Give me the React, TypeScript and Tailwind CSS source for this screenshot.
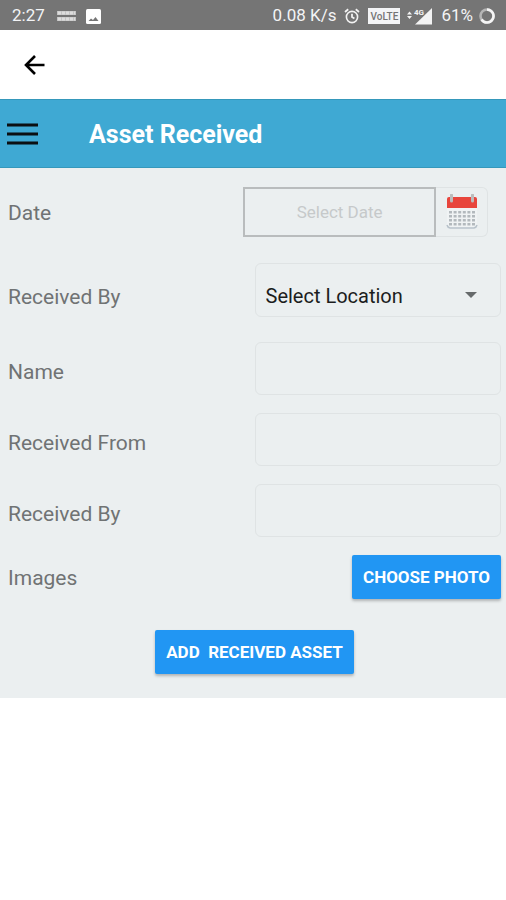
import { useState } from 'react'
import type { ReactNode } from 'react'

const locations = ['Select Location', 'Head Office', 'Warehouse', 'Branch']

function StatusBar() {
  return (
    <div className="flex h-[30px] items-center bg-[#757575] pl-3 pr-[11px] pt-[2px] text-[17px] text-gray-100">
      <span>2:27</span>

      <svg className="ml-3 h-3 w-[19px]" viewBox="0 0 19 12" aria-hidden="true">
        <path d="M0 3h19M0 9h19" stroke="#c4c4c4" strokeWidth="4" />
        <path d="M1 3h17M1 9h17" stroke="#e8e8e8" strokeWidth="3" strokeDasharray="3 1" opacity="0.7" />
      </svg>

      <svg className="ml-[10px] size-[15px]" viewBox="0 0 15 15" aria-hidden="true">
        <rect width="15" height="15" rx="1.5" fill="#fff" />
        <path d="M2.5 12l2.5-2.5 2 1.5 2.5-3 3 4z" fill="#757575" />
      </svg>

      <span className="ml-auto">0.08 K/s</span>

      <svg className="ml-2 size-4" viewBox="0 0 16 16" fill="none" stroke="#f3f3f3" aria-hidden="true">
        <circle cx="8" cy="9" r="5.6" strokeWidth="1.6" />
        <path d="M8 5.8V9l2.4 1.6M1 4l3.2-2.7M15 4l-3.2-2.7" strokeWidth="1.8" />
      </svg>

      <span className="ml-2 flex h-4 w-8 items-center justify-center bg-gray-100 text-[10px] font-medium text-[#757575]">
        VoLTE
      </span>

      <svg className="ml-[7px] h-[17px] w-[25px]" viewBox="0 0 25 17" aria-hidden="true">
        <path d="M2.5 3.5l2.5 3h-5zM2.5 11l2.5-3h-5z" fill="#f3f3f3" />
        <path d="M25 0v16.5H8z" fill="#f3f3f3" />
        <path d="M6 0h11v7L14 9H6z" fill="#757575" />
        <text x="7" y="7" fontSize="8" fontWeight="700" fill="#f3f3f3">4G</text>
      </svg>

      <span className="ml-[9px]">61%</span>

      <svg className="ml-[6px] size-4" viewBox="0 0 16 16" fill="none" strokeWidth="2.6" aria-hidden="true">
        <circle cx="8" cy="8" r="6.5" stroke="#b5b5b5" />
        <path d="M8 1.5A6.5 6.5 0 1 1 2.5 11.5" stroke="#f5f5f5" />
      </svg>
    </div>
  )
}

function CalendarIcon() {
  const dots = [0, 1, 2, 3, 4, 5]
  return (
    <svg className="h-9 w-8" viewBox="0 0 32 36" aria-hidden="true">
      <path d="M1 13h30v19a3 3 0 0 1-3 3H4a3 3 0 0 1-3-3z" fill="#f0f3f4" />
      <path d="M1 31a4 4 0 0 0 3 3h24a4 4 0 0 0 3-3" fill="none" stroke="#b8c2ca" strokeWidth="1.5" />
      <path d="M1 14V5a2 2 0 0 1 2-2h26a2 2 0 0 1 2 2v9z" fill="#e8453c" />
      <path d="M5.5 1v6M26.5 1v6" stroke="#bcbcbc" strokeWidth="3" strokeLinecap="round" />
      {[17, 21, 25, 29].map((y) =>
        dots.map((i) => <rect key={`${i}-${y}`} x={3 + i * 4.6} y={y} width="3" height="2.5" fill="#b3b9bd" />)
      )}
    </svg>
  )
}

type RowProps = {
  id: string
  label: string
  className: string
  labelClass?: string
  children: ReactNode
}

function Row({ id, label, className, labelClass = 'pt-[6px]', children }: RowProps) {
  return (
    <div className={`flex items-center justify-between ${className}`}>
      <label htmlFor={id} className={`text-[21px] leading-6 text-[#707374] ${labelClass}`}>
        {label}
      </label>
      {children}
    </div>
  )
}

const field = 'h-[53px] w-1/2 rounded-md border border-[#dfe3e4] bg-transparent px-3 text-xl text-black outline-none'
const action = 'h-11 rounded-xs bg-[#2196f3] px-[11px] pt-[2px] text-[17px] font-bold text-white whitespace-pre shadow-[0_2px_3px_rgba(0,0,0,0.25)]'

export default function App() {
  const [date, setDate] = useState('')
  const [location, setLocation] = useState(locations[0])
  const [name, setName] = useState('')
  const [from, setFrom] = useState('')
  const [by, setBy] = useState('')

  return (
    <main className="min-h-screen bg-white font-['Roboto',sans-serif]">
      <StatusBar />

      <nav className="flex h-[69px] items-center px-6">
        <button type="button" aria-label="Back">
          <svg className="size-[22px]" viewBox="0 0 22 22" fill="none" stroke="#000" strokeWidth="2.6" aria-hidden="true">
            <path d="M20.5 11H3M11 2l-9 9 9 9" />
          </svg>
        </button>
      </nav>

      <header className="flex h-[69px] items-center border-y border-[#3598bb] bg-[#3fa9d3] pl-[7px]">
        <button type="button" aria-label="Menu">
          <svg className="h-6 w-[31px]" viewBox="0 0 31 24" stroke="#0b0f11" strokeWidth="3" aria-hidden="true">
            <path d="M0 3h31M0 12h31M0 21h31" />
          </svg>
        </button>
        <h1 className="ml-[51px] pt-[2px] text-[25px] font-bold text-white">Asset Received</h1>
      </header>

      <form className="bg-[#ebeff0] pb-6 pl-2 pr-[5px] pt-[19px]" onSubmit={(e) => e.preventDefault()}>
        <Row id="date" label="Date" className="pr-[13px]" labelClass="pt-[2px]">
          <div className="flex h-[50px] w-[51%]">
            <input
              id="date"
              type="text"
              placeholder="Select Date"
              value={date}
              onChange={(e) => setDate(e.target.value)}
              className="min-w-0 flex-1 border-2 border-[#b9bcbd] bg-transparent pt-[2px] text-center text-[17px] outline-none placeholder:text-[#c6c9ca]"
            />
            <button
              type="button"
              aria-label="Open calendar"
              className="flex w-[52px] items-center justify-center rounded-r-md border border-l-0 border-[#dfe3e4]"
            >
              <CalendarIcon />
            </button>
          </div>
        </Row>

        <Row id="location" label="Received By" className="mt-[26px]" labelClass="pt-[14px]">
          <div className="relative flex w-1/2">
            <select
              id="location"
              value={location}
              onChange={(e) => setLocation(e.target.value)}
              className="h-[54px] w-full appearance-none rounded-md border border-[#dfe3e4] bg-transparent px-[10px] pt-3 text-xl text-[#1c1d1d] outline-none"
            >
              {locations.map((l) => (
                <option key={l}>{l}</option>
              ))}
            </select>
            <svg className="pointer-events-none absolute right-6 top-[29px] h-[6px] w-3" viewBox="0 0 12 6" aria-hidden="true">
              <path d="M0 0h12L6 6z" fill="#666a6b" />
            </svg>
          </div>
        </Row>

        <Row id="name" label="Name" className="mt-[25px]">
          <input id="name" type="text" value={name} onChange={(e) => setName(e.target.value)} className={field} />
        </Row>

        <Row id="from" label="Received From" className="mt-[18px]">
          <input id="from" type="text" value={from} onChange={(e) => setFrom(e.target.value)} className={field} />
        </Row>

        <Row id="by" label="Received By" className="mt-[18px]">
          <input id="by" type="text" value={by} onChange={(e) => setBy(e.target.value)} className={field} />
        </Row>

        <Row id="images" label="Images" className="mt-[18px]" labelClass="pt-[2px]">
          <button id="images" type="button" className={action}>
            CHOOSE PHOTO
          </button>
        </Row>

        <div className="mt-[31px] flex justify-center">
          <button type="submit" className={action}>
            {'ADD  RECEIVED ASSET'}
          </button>
        </div>
      </form>
    </main>
  )
}
